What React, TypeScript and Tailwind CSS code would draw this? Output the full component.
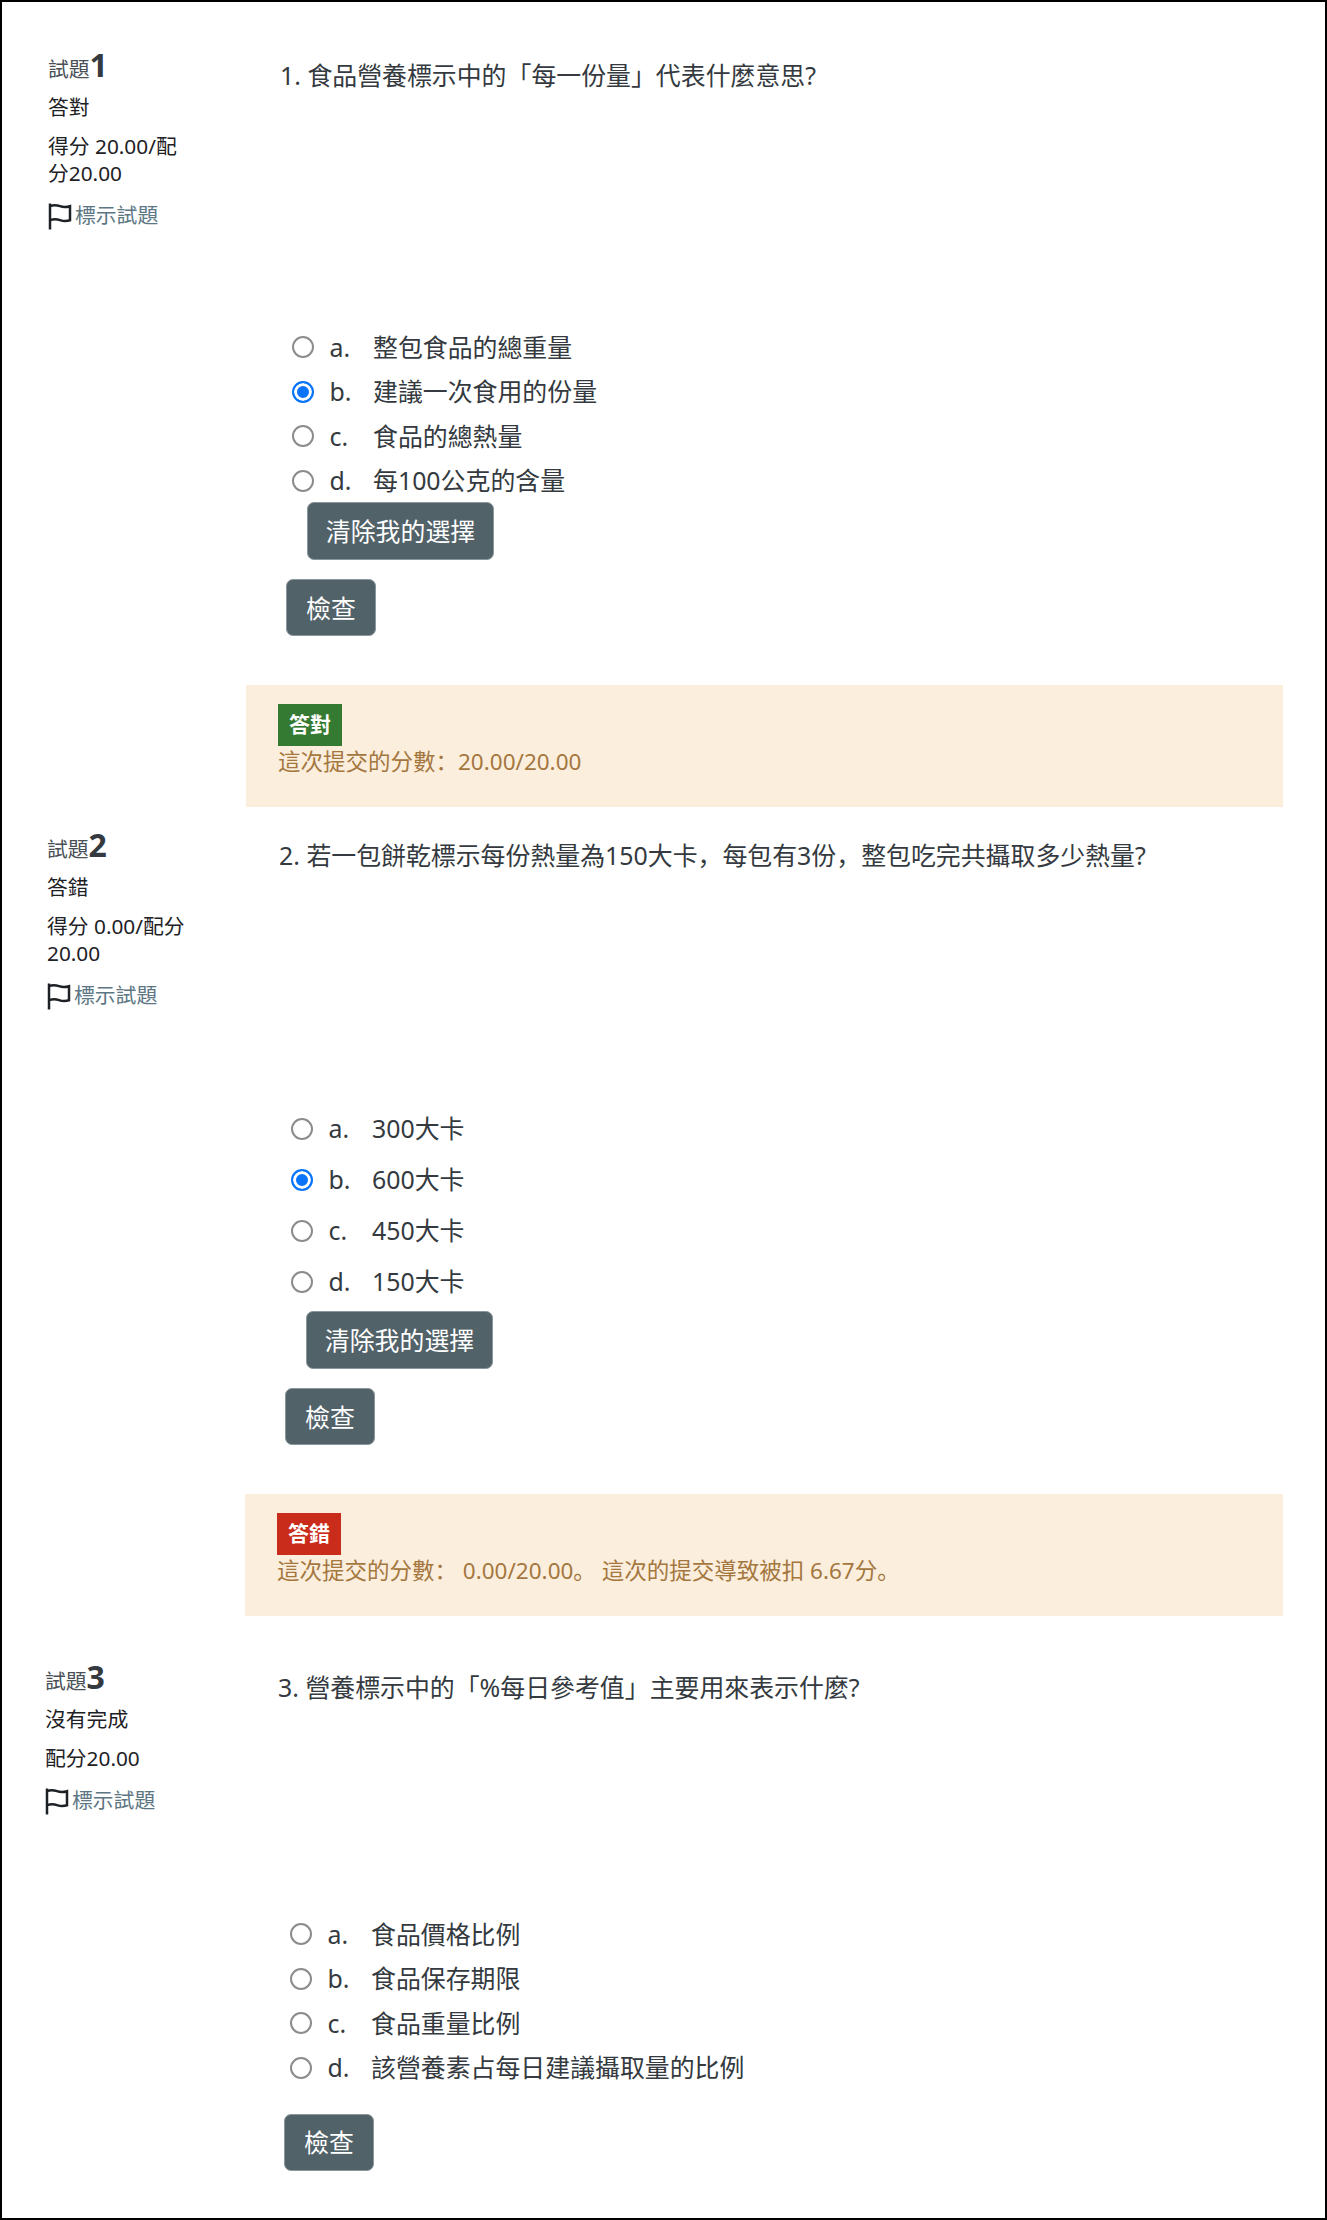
function Flag() {
  return (
    <svg width="24" height="27" viewBox="0 0 24 27" fill="none" stroke="#1d2125" strokeWidth="2.500" className="shrink-0">
      <path d="M2 0.500v26" />
      <path d="M2 3c4-1.500 7-1 10 .2s6 1.300 10 .1v14c-4 1.200-7 .900-10-.2s-6-1.300-10 0" />
    </svg>
  );
}

function Left({ n, status, score }: { n: string; status: string; score: string[] }) {
  return (
    <div className="w-[232px] shrink-0 text-[20.800px] text-[#1d2125]">
      <div className="-mt-[7px] h-[30px] flex items-baseline leading-[30px] text-[#495057]">
        <span>試題</span>
        <span className="text-[32px] font-bold text-[#343a40]">{n}</span>
      </div>
      <div className="mt-[13px] leading-[28px]">{status}</div>
      <div className="mt-[12px] leading-[27px]">
        {score.map((s) => (
          <div key={s}>{s}</div>
        ))}
      </div>
      <div className="mt-[15px] flex items-center h-[28px] text-[#5d7684]">
        <Flag />
        <span className="ml-[3px]">標示試題</span>
      </div>
    </div>
  );
}

function Options({ items, checked, row }: { items: string[]; checked?: number; row: string }) {
  return (
    <div className="pl-[46px] text-[24.900px] text-[#343a40]">
      {items.map((t, i) => (
        <div key={t} className={`flex items-center ${row}`}>
          <input
            type="radio"
            name={items[0]}
            defaultChecked={checked === i}
            className="appearance-none w-[22px] h-[22px] m-0 shrink-0 rounded-full border-2 border-[#8c8c8c] bg-white checked:border-[#0a75fa] checked:bg-[#0a75fa] checked:shadow-[inset_0_0_0_3px_white]"
          />
          <span className="w-[43.500px] ml-[15.500px]">{"abcd"[i]}.</span>
          <span>{t}</span>
        </div>
      ))}
    </div>
  );
}

const btn =
  "block bg-[#526269] border border-[#8a979c] rounded-[7px] text-white text-[24.900px] leading-[34px]";

function Feedback({ label, color, children }: { label: string; color: string; children: React.ReactNode }) {
  return (
    <div className="mt-[49px] h-[122px] bg-[#fceedc] pt-[19px] pl-[32px] text-[22.500px] text-[#a4773f]">
      <div className={`h-[42px] w-[64px] ${color} flex items-center justify-center text-white font-bold text-[21px]`}>{label}</div>
      <div className="leading-[32px]">{children}</div>
    </div>
  );
}

const questionText = "pl-[34px] text-[24.900px] leading-[36px] text-[#343a40]";

export default function App() {
  return (
    <div className="w-[1327px] h-[2220px] border-2 border-black bg-white overflow-hidden font-['Noto_Sans','Noto_Sans_CJK_SC',sans-serif]">
      <section className="flex mt-[55px] ml-[46px] w-[1235px]">
        <Left n="1" status="答對" score={["得分 20.00/配", "分20.00"]} />
        <div className="flex-1 min-w-0 ml-[-34px]">
          <div className={questionText}>1. 食品營養標示中的「每一份量」代表什麼意思?</div>
          <div className="mt-[232px]">
            <Options items={["整包食品的總重量", "建議一次食用的份量", "食品的總熱量", "每100公克的含量"]} checked={1} row="h-[44.500px]" />
          </div>
          <button className={`${btn} -mt-[1px] ml-[61px] w-[187px] h-[58px]`}>清除我的選擇</button>
          <button className={`${btn} mt-[19px] ml-[40px] w-[90px] h-[57px]`}>檢查</button>
          <Feedback label="答對" color="bg-[#357a32]">這次提交的分數：20.00/20.00</Feedback>
        </div>
      </section>

      <section className="flex mt-[30px] ml-[45px] w-[1236px]">
        <Left n="2" status="答錯" score={["得分 0.00/配分", "20.00"]} />
        <div className="flex-1 min-w-0 ml-[-34px]">
          <div className={questionText}>2. 若一包餅乾標示每份熱量為150大卡，每包有3份，整包吃完共攝取多少熱量?</div>
          <div className="mt-[230px]">
            <Options items={["300大卡", "600大卡", "450大卡", "150大卡"]} checked={1} row="h-[51px]" />
          </div>
          <button className={`${btn} mt-[4px] ml-[61px] w-[187px] h-[58px]`}>清除我的選擇</button>
          <button className={`${btn} mt-[19px] ml-[40px] w-[90px] h-[57px]`}>檢查</button>
          <Feedback label="答錯" color="bg-[#ca2c1c]">這次提交的分數： 0.00/20.00。 這次的提交導致被扣 6.67分。</Feedback>
        </div>
      </section>

      <section className="flex mt-[53px] ml-[43px] w-[1238px]">
        <Left n="3" status="沒有完成" score={["配分20.00"]} />
        <div className="flex-1 min-w-0 ml-[-33px]">
          <div className={questionText}>3. 營養標示中的「%每日參考值」主要用來表示什麼?</div>
          <div className="mt-[207px]">
            <Options items={["食品價格比例", "食品保存期限", "食品重量比例", "該營養素占每日建議攝取量的比例"]} row="h-[44.500px]" />
          </div>
          <button className={`${btn} mt-[23.500px] ml-[40px] w-[90px] h-[57px]`}>檢查</button>
        </div>
      </section>
    </div>
  );
}
